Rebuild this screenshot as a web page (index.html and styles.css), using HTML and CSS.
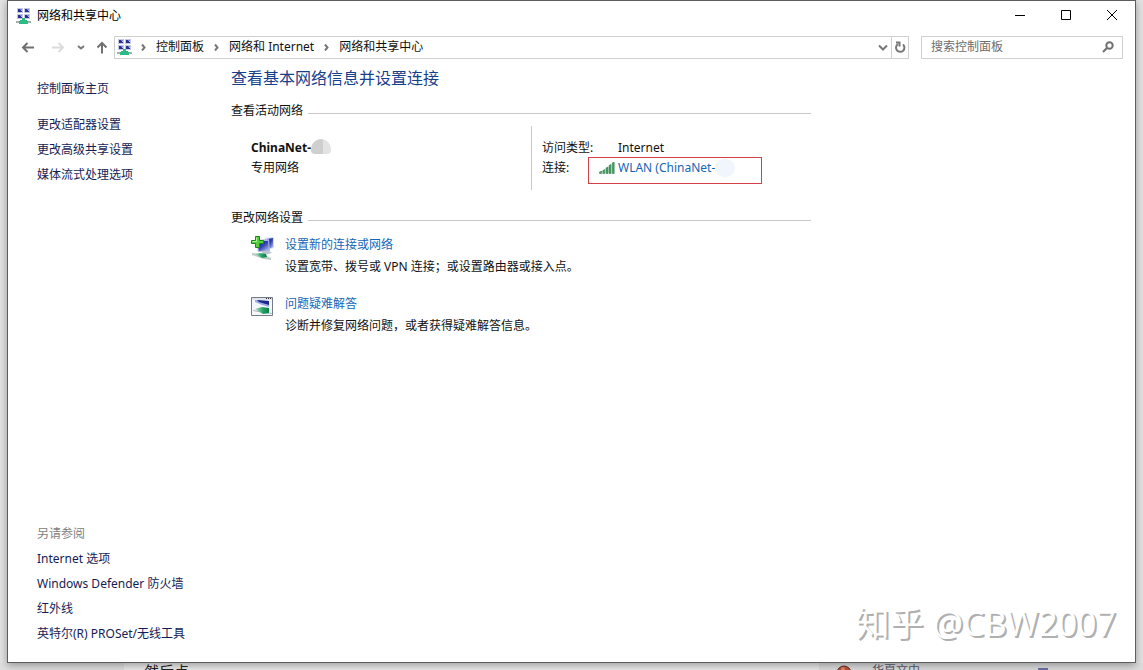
FILE: index.html
```html
<!DOCTYPE html>
<html lang="zh-CN">
<head>
<meta charset="utf-8">
<title>网络和共享中心</title>
<link rel="stylesheet" href="styles.css">
</head>
<body>
<svg class="defs" aria-hidden="true">
  <defs>
    <linearGradient id="blue" x1="0" y1="0" x2="1" y2="1"><stop offset="0" stop-color="#151d90"/><stop offset="0.5" stop-color="#3444b4"/><stop offset="1" stop-color="#c4d0f4"/></linearGradient>
    <linearGradient id="green" x1="0" y1="0" x2="1" y2="0"><stop offset="0" stop-color="#b4dcc4"/><stop offset="0.6" stop-color="#20a060"/><stop offset="1" stop-color="#0b7c40"/></linearGradient>
    <symbol id="network" viewBox="0 0 16 16">
      <path fill="#c3c9e2" d="M1 0h6v5H1zM8 0h6v5H8zM1 6h6v5H1zM8 6h6v5H8z"/>
      <path fill="#2c3096" d="M2 1h2v1h1v1h1v1H2zM9 1h2v1h1v1h1v1H9zM2 7h2v1h1v1h1v1H2zM9 7h2v1h1v1h1v1H9z"/>
      <path fill="#7d88cc" d="M4 1h2v1H4zM11 1h2v1h-2zM4 7h2v1H4zM11 7h2v1h-2z"/>
      <path fill="#9fb2b0" d="M0 13h15v2H0z"/>
      <path fill="#2dbb83" d="M6 10h3v2h2v1h1v3H3v-3h1v-1h2z"/>
    </symbol>
  </defs>
</svg>
<div class="desktop">
  <div class="window">
    <header class="titlebar">
      <svg class="app-icon"><use href="#network"/></svg>
      <h1 class="window-title">网络和共享中心</h1>
      <div class="window-controls">
        <button class="control" aria-label="最小化"><svg viewBox="0 0 12 12"><path d="M1 5.500h10"/></svg></button>
        <button class="control" aria-label="最大化"><svg viewBox="0 0 12 12"><path d="M1.500 .5h9v9h-9z"/></svg></button>
        <button class="control" aria-label="关闭"><svg viewBox="0 0 12 12"><path d="M1 0l10 10M11 0L1 10"/></svg></button>
      </div>
    </header>
    <nav class="toolbar" aria-label="导航">
      <div class="history">
        <button class="tool" aria-label="后退"><svg viewBox="0 0 14 14"><path d="M13 7.500H2M6.500 3L2 7.500l4.500 4.500"/></svg></button>
        <button class="tool tool-disabled" aria-label="前进" disabled><svg viewBox="0 0 14 14"><path d="M1 7.500h11M7.500 3L12 7.500l-4.500 4.500"/></svg></button>
        <button class="tool tool-small" aria-label="最近的位置"><svg viewBox="0 0 14 14"><path d="M4 6l3 2.500L10 6"/></svg></button>
        <button class="tool" aria-label="上移"><svg viewBox="0 0 14 14"><path d="M7 13.500V3M2.500 7.500L7 3l4.500 4.500"/></svg></button>
      </div>
      <div class="address">
        <svg class="address-icon"><use href="#network"/></svg>
        <svg class="chevron" viewBox="0 0 8 8"><path d="M3 1.500l2.500 3L3 7.500"/></svg>
        <a class="crumb" href="#">控制面板</a>
        <svg class="chevron" viewBox="0 0 8 8"><path d="M3 1.500l2.500 3L3 7.500"/></svg>
        <a class="crumb" href="#">网络和 Internet</a>
        <svg class="chevron" viewBox="0 0 8 8"><path d="M3 1.500l2.500 3L3 7.500"/></svg>
        <a class="crumb" href="#">网络和共享中心</a>
        <button class="drop" aria-label="以前的位置"><svg viewBox="0 0 12 12"><path d="M2 4.500l4 4 4-4"/></svg></button>
        <button class="refresh" aria-label="刷新"><svg viewBox="0 0 12 12"><path d="M9 3.500A4.200 4.200 0 1 1 3.800 3.200M2 1.500h3.500v4"/></svg></button>
      </div>
      <div class="search">
        <input class="search-input" type="search" placeholder="搜索控制面板" aria-label="搜索控制面板">
        <svg class="search-icon" viewBox="0 0 12 12"><circle cx="7.500" cy="4.500" r="3.200"/><path d="M5.200 6.800L1 11"/></svg>
      </div>
    </nav>
    <div class="content">
      <aside class="sidebar">
        <a class="side-link side-home" href="#">控制面板主页</a>
        <a class="side-link" href="#">更改适配器设置</a>
        <a class="side-link" href="#">更改高级共享设置</a>
        <a class="side-link" href="#">媒体流式处理选项</a>
        <div class="see-also">
          <h2 class="see-title">另请参阅</h2>
          <a class="side-link" href="#">Internet 选项</a>
          <a class="side-link" href="#">Windows Defender 防火墙</a>
          <a class="side-link" href="#">红外线</a>
          <a class="side-link" href="#">英特尔(R) PROSet/无线工具</a>
        </div>
      </aside>
      <main class="main">
        <h2 class="page-title">查看基本网络信息并设置连接</h2>
        <section>
          <h3 class="section-title">查看活动网络</h3>
          <div class="active-network">
            <div class="network-name">
              <div class="name-line"><strong>ChinaNet-</strong><span class="smudge"></span></div>
              <div>专用网络</div>
            </div>
            <dl class="network-info">
              <dt>访问类型:</dt>
              <dd>Internet</dd>
              <dt>连接:</dt>
              <dd class="connection">
                <svg class="signal" viewBox="0 0 16 13"><g fill="#49a568" stroke="#27703d" stroke-width=".5"><path d="M.5 10l2-1v2.500h-2zM3.800 8.500l2-1v4h-2zM7 6l2-1v6.500H7zM10 3.500l2-1v9h-2zM13.200 1l2-1v11.500h-2z"/></g></svg>
                <a class="link" href="#">WLAN (ChinaNet-</a><span class="smudge smudge-light"></span>
              </dd>
            </dl>
          </div>
        </section>
        <section>
          <h3 class="section-title">更改网络设置</h3>
          <div class="tasks">
            <div class="task">
              <svg class="task-icon" viewBox="0 0 26 26">
                <path fill="#d4dcf2" d="M15 3l9-1v11l-6 2z"/><path fill="url(#blue)" d="M17 4l6-1v9l-5 2z"/>
                <path fill="#a9b4e0" d="M6 5l13-1 1 12-12 1z"/><path fill="url(#blue)" d="M7 6h11l1 9-10 1z"/>
                <path fill="#b8c3ce" d="M11 16h8l3 2-8 2z"/>
                <path fill="#bccbc6" d="M2 18l10 1 9 4v2l-7-1-12-4z"/><path fill="url(#green)" d="M5 19l5-1 6 1 1 3-5 1z"/>
                <path fill="#55cf3d" stroke="#158a18" d="M5.500 1.500h4v4h4v3h-4v4h-4v-4h-4v-3h4z"/><path stroke="#b4f39c" d="M6.500 2.500v4h-4"/>
              </svg>
              <div class="task-text">
                <a class="link" href="#">设置新的连接或网络</a>
                <p class="task-desc">设置宽带、拨号或 VPN 连接；或设置路由器或接入点。</p>
              </div>
            </div>
            <div class="task">
              <svg class="task-icon" viewBox="0 0 26 26">
                <path fill="#f5f7fa" stroke="#737b85" d="M1.500 3.500h21v18h-21z"/><path fill="#dfe4ed" d="M2 4h20v2H2z"/>
                <path fill="#333" d="M16 4h1v1h-1zM18 4h1v1h-1zM20 4h1v1h-1z"/>
                <path fill="#9fabe0" d="M5 6l14 1v6l-7-2-7-3z"/><path fill="#1c278f" d="M7 6l12 1v4l-10-3z"/>
                <path fill="#abb8c6" d="M3 16l6 1 13 2v1l-8-1-11-2z"/><path fill="url(#green)" d="M5 15l7-2 7 1v5l-6 1z"/>
              </svg>
              <div class="task-text">
                <a class="link" href="#">问题疑难解答</a>
                <p class="task-desc">诊断并修复网络问题，或者获得疑难解答信息。</p>
              </div>
            </div>
          </div>
        </section>
      </main>
    </div>
    <div class="watermark">知乎 @CBW2007</div>
  </div>
  <div class="behind">
    <div class="behind-left"></div>
    <div class="behind-page">然后点</div>
    <div class="behind-right">
      <svg class="avatar" viewBox="0 0 16 16"><circle cx="8" cy="8" r="7" fill="#bb5138" stroke="#583029"/><circle cx="7" cy="4" r="2" fill="#e38862"/></svg>
      <span>华夏文中</span>
      <span class="behind-mark"></span>
    </div>
  </div>
</div>
</body>
</html>
```
FILE: styles.css
```css
*, *::before, *::after { box-sizing: border-box; }

body {
  margin: 0;
  font: 12px/20px "Noto Sans", "Noto Sans CJK SC", sans-serif;
  color: #111;
  background: #e3e3e3;
}

h1, h2, h3, p, dl, dd { margin: 0; font-size: 12px; font-weight: 400; }
a { color: inherit; text-decoration: none; }
button { padding: 0; border: 0; background: none; }
svg { display: block; flex: none; fill: none; }

.defs { position: absolute; width: 0; height: 0; }

.desktop {
  display: flex;
  flex-direction: column;
  height: 100vh;
  overflow: hidden;
}

.window {
  position: relative;
  z-index: 1;
  flex: 1;
  display: flex;
  flex-direction: column;
  margin: 0 7px;
  background: #fff;
  border: 1px solid #5c5d61;
  box-shadow: 0 2px 8px rgba(0, 0, 0, 0.35);
}

/* Title bar */
.titlebar { display: flex; align-items: center; height: 29px; padding-left: 8px; }
.app-icon { width: 16px; height: 16px; }
.window-title { flex: 1; margin-left: 5px; color: #000; }
.window-controls { display: flex; }
.control { display: grid; place-items: center; width: 46px; height: 28px; }
.control svg { width: 12px; height: 12px; stroke: #000; }

/* Toolbar */
.toolbar { display: flex; align-items: center; height: 34px; padding: 0 12px; }
.history { display: flex; align-items: center; width: 94px; }
.tool { flex: none; display: grid; place-items: center; width: 16px; height: 20px; margin-right: 14px; }
.tool svg { width: 14px; height: 14px; stroke: #707070; stroke-width: 2; }
.tool-disabled { margin-right: 7px; }
.tool-disabled svg { stroke: #dcdcdc; }
.tool-small { margin-right: 5px; }
.tool-small svg { stroke: #777; }
.tool:last-child { margin-right: 0; }

.address {
  flex: 1;
  display: flex;
  align-items: center;
  height: 23px;
  padding-left: 2px;
  border: 1px solid #d0d0d0;
}
.address-icon { width: 16px; height: 16px; }
.chevron { width: 8px; height: 8px; margin: 0 9px 0 8px; stroke: #777; stroke-width: 2; }
.address-icon + .chevron { margin-left: 6px; }
.drop { width: 16px; height: 21px; margin-left: auto; display: grid; place-items: center; }
.refresh { display: grid; place-items: center; width: 17px; height: 21px; border-left: 1px solid #d0d0d0; }
.drop svg, .refresh svg { width: 12px; height: 12px; stroke: #777; stroke-width: 2; }

.search {
  display: flex;
  align-items: center;
  width: 202px;
  height: 23px;
  margin-left: 12px;
  padding: 0 8px 0 9px;
  border: 1px solid #d0d0d0;
}
.search-input {
  flex: 1;
  min-width: 0;
  padding: 0;
  border: 0;
  outline: 0;
  background: none;
  font: inherit;
}
.search-input::placeholder { color: #6d6d6d; }
.search-icon { width: 12px; height: 12px; stroke: #707070; stroke-width: 2; }

/* Content */
.content { flex: 1; display: flex; }
.sidebar {
  display: flex;
  flex-direction: column;
  width: 223px;
  padding: 15px 0 13px 29px;
  color: #151c55;
}
.side-link { margin-bottom: 5px; white-space: nowrap; }
.side-home { margin-bottom: 16px; }
.see-also { display: flex; flex-direction: column; margin-top: auto; }
.see-title { margin-bottom: 5px; color: #808080; }

.main { width: 580px; padding-top: 2px; }
.page-title { margin-bottom: 11px; font-size: 16px; line-height: 24px; color: #17408b; }
.section-title { display: flex; align-items: center; gap: 5px; }
.section-title::after { content: ""; flex: 1; height: 1px; margin-top: 4px; background: #c9c9c9; }

.active-network { display: flex; margin: 5px 0 18px; padding-left: 20px; }
.network-name { width: 280px; padding-top: 12px; }
.name-line { display: flex; align-items: center; }
.smudge {
  width: 20px;
  height: 15px;
  margin-bottom: 4px;
  border-radius: 10px 10px 4px 4px;
  background: linear-gradient(90deg, #cfcfcf 60%, #e3e3e3 60%);
}
.network-info {
  display: grid;
  grid-template-columns: 76px auto;
  align-content: start;
  height: 64px;
  padding: 12px 0 0 10px;
  border-left: 1px solid #c9c9c9;
}
.connection { position: relative; display: flex; align-items: center; }
.signal { width: 16px; height: 13px; margin-left: -19px; margin-right: 3px; }
.connection::after {
  content: "";
  position: absolute;
  left: -30px;
  top: -1px;
  width: 174px;
  height: 27px;
  border: 1px solid #d2404a;
}
.smudge-light { height: 18px; margin-bottom: 0; border-radius: 10px; background: #f1f5fc; }
.link { color: #1566b5; }

.tasks { padding-top: 1px; }
.task { display: flex; gap: 9px; padding: 6px 0 11px 19px; }
.task-icon { width: 26px; height: 26px; }
.task-desc { margin-top: 2px; color: #111; }

.watermark {
  position: absolute;
  right: 19px;
  bottom: 17px;
  font-size: 34px;
  line-height: 44px;
  color: #fff;
  text-shadow: 2px 2px 0 #b0b0b0;
}

/* Page behind the window */
.behind { display: flex; height: 7px; line-height: 16px; overflow: hidden; }
.behind-left { width: 124px; background: #dedede; }
.behind-page { flex: 1; padding-left: 20px; font-size: 15px; color: #222; background: #e9e9e9; }
.behind-right { display: flex; gap: 20px; width: 324px; padding-left: 17px; color: #565b70; background: #dcdcdc; }
.avatar { width: 16px; height: 16px; margin-top: 2px; }
.behind-mark { width: 10px; height: 4px; margin: 5px 0 0 98px; background: #6d70a5; }
```
